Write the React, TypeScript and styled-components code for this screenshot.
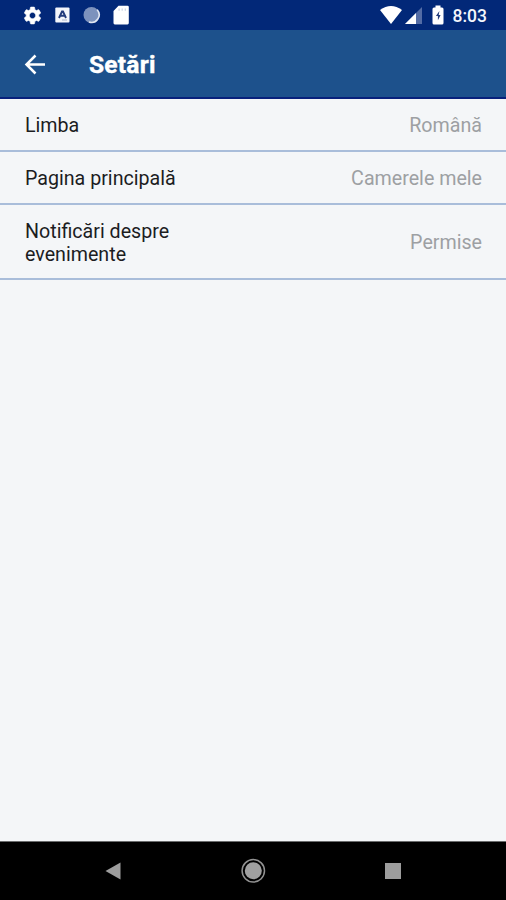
import React from "react";
import styled, { createGlobalStyle } from "styled-components";

const GlobalStyle = createGlobalStyle`
  * { box-sizing: border-box; }
  body { margin: 0; background: #f4f6f8; font-family: Roboto, sans-serif; }
`;

const Screen = styled.div`
  display: flex;
  flex-direction: column;
  width: 506px;
  height: 900px;
  background: #f4f6f8;
`;

const StatusBar = styled.div`
  display: flex;
  justify-content: space-between;
  flex: none;
  height: 30px;
  background: #022878;
`;

const StatusGroup = styled.div<{ $start?: number; $end?: number }>`
  display: flex;
  align-items: center;
  padding-left: ${(p) => p.$start ?? 0}px;
  padding-right: ${(p) => p.$end ?? 0}px;
`;

const Glyph = styled.svg<{ $gap?: number }>`
  display: block;
  flex: none;
  margin-right: ${(p) => p.$gap ?? 0}px;
`;

const Clock = styled.span`
  color: #f4f6fc;
  font-size: 17.5px;
  font-weight: 500;
  line-height: 30px;
  padding-top: 2px;
`;

const AppBar = styled.header`
  display: flex;
  align-items: center;
  flex: none;
  height: 69px;
  padding-left: 22px;
  background: #1d518c;
  border-bottom: 2px solid #08217c;
`;

const BackButton = styled.button`
  display: flex;
  width: 26px;
  height: 26px;
  padding: 0;
  border: 0;
  background: none;
`;

const Title = styled.h1`
  margin: 0 0 0 41px;
  padding-top: 2px;
  color: #fff;
  font-size: 24.6px;
  font-weight: 700;
  line-height: 30px;
  letter-spacing: 0.2px;
  -webkit-text-stroke: 0.4px #fff;
`;

const Settings = styled.main`
  flex: 1;
`;

const Row = styled.div<{ $height: number }>`
  display: flex;
  align-items: center;
  justify-content: space-between;
  height: ${(p) => p.$height}px;
  padding: 3px 24px 0 25px;
  border-bottom: 2px solid #a9bdda;
  font-size: 19.65px;
  line-height: 23.4px;
`;

const Label = styled.span`
  max-width: 200px;
  color: #1c1d1f;
  white-space: pre-line;
`;

const Value = styled.span`
  color: #9da0a3;
`;

const NavBar = styled.nav`
  display: grid;
  grid-template-columns: repeat(3, 140px);
  justify-content: center;
  flex: none;
  height: 59px;
  background: #000;
  border-top: 1px solid #6b6c6d;
`;

const NavButton = styled.button`
  display: flex;
  align-items: center;
  justify-content: center;
  padding: 0;
  border: 0;
  background: none;
`;

const rows = [
  { label: "Limba", value: "Română", height: 53 },
  { label: "Pagina principală", value: "Camerele mele", height: 53 },
  { label: "Notificări despre\nevenimente", value: "Permise", height: 75 },
];

export default function App() {
  return (
    <Screen>
      <GlobalStyle />
      <StatusBar>
        <StatusGroup $start={22}>
          <Glyph width="21" height="21" viewBox="0 0 24 24" fill="#fff" $gap={12}>
            <path stroke="#fff" strokeWidth=".7" d="M19.14 12.94c.04-.3.06-.61.06-.94 0-.32-.02-.64-.07-.94l2.03-1.58c.18-.14.23-.41.12-.61l-1.92-3.32c-.12-.22-.37-.29-.59-.22l-2.39.96c-.5-.38-1.03-.7-1.62-.94L14.4 2.81c-.04-.24-.24-.41-.48-.41h-3.84c-.24 0-.43.17-.47.41L9.25 5.35c-.59.24-1.13.57-1.62.94l-2.39-.96c-.22-.08-.47 0-.59.22L2.74 8.87c-.12.21-.08.47.12.61l2.03 1.58c-.05.3-.09.63-.09.94s.02.64.07.94l-2.03 1.58c-.18.14-.23.41-.12.61l1.92 3.32c.12.22.37.29.59.22l2.39-.96c.5.38 1.03.7 1.62.94l.36 2.54c.05.24.24.41.48.41h3.84c.24 0 .44-.17.47-.41l.36-2.54c.59-.24 1.13-.56 1.62-.94l2.39.96c.22.08.47 0 .59-.22l1.92-3.32c.12-.22.07-.47-.12-.61l-2.01-1.58zM12 15.6c-1.98 0-3.6-1.62-3.6-3.6s1.62-3.6 3.6-3.6 3.6 1.62 3.6 3.6-1.62 3.6-3.6 3.6z" />
          </Glyph>
          <Glyph width="15" height="16" viewBox="0 0 15 16" $gap={12}>
            <rect x=".3" y=".5" width="14.2" height="15" rx="1" fill="#f3f5fb" />
            <path d="M4 11 7 4.5h1L11 11M5.2 8.800h4.400" fill="none" stroke="#233c7c" strokeWidth="1.900" />
            <path d="M7 13h5" stroke="#a9b5c9" />
          </Glyph>
          <Glyph width="19" height="18" viewBox="0 0 19 18" $gap={12}>
            <circle cx="9.5" cy="9" r="8" fill="#7d92bd" />
            <path d="M15.200 3.800A7.600 7.600 0 0 1 7 16" fill="none" stroke="#e1e6f2" strokeWidth="1.600" />
          </Glyph>
          <Glyph width="16" height="20" viewBox="0 0 16 20">
            <path d="M5.5.8h9a1.3 1.3 0 0 1 1.3 1.3v16a1.3 1.3 0 0 1-1.3 1.3H1.8A1.3 1.3 0 0 1 .5 18.100V6Z" fill="#fff" />
            <path d="M6.100 3.400v2.300M9.200 3.400v2.300M12.300 3.400v2.300" stroke="#ccd5e3" strokeWidth="1.200" />
          </Glyph>
        </StatusGroup>
        <StatusGroup $end={19}>
          <Glyph width="22" height="18" viewBox="0 0 22 18" $gap={3}>
            <path d="M0 4Q11-4 22 4L11 18Z" fill="#fff" />
          </Glyph>
          <Glyph width="17" height="17" viewBox="0 0 17 17" $gap={10}>
            <path d="M17 0v17H0Z" fill="#536ca5" />
            <path d="M11 6v11H0Z" fill="#fff" />
          </Glyph>
          <Glyph width="12" height="20" viewBox="0 0 12 20" $gap={9}>
            <path d="M3.500.5h5v2h1.500a1.500 1.500 0 0 1 1.500 1.500v14a1.500 1.500 0 0 1-1.500 1.500H2a1.500 1.500 0 0 1-1.500-1.500V4A1.500 1.500 0 0 1 2 2.500h1.500Z" fill="#fff" />
            <path d="M7.400 6 3.900 11h2v4.300L8.600 10H6.700Z" fill="#233c7c" />
          </Glyph>
          <Clock>8:03</Clock>
        </StatusGroup>
      </StatusBar>
      <AppBar>
        <BackButton aria-label="Înapoi">
          <Glyph width="26" height="26" viewBox="0 0 26 26">
            <path d="M23 13.500H4.500M13.500 4.500 4.500 13.500l9 9" fill="none" stroke="#fff" strokeWidth="2.500" />
          </Glyph>
        </BackButton>
        <Title>Setări</Title>
      </AppBar>
      <Settings>
        {rows.map((row) => (
          <Row key={row.label} $height={row.height}>
            <Label>{row.label}</Label>
            <Value>{row.value}</Value>
          </Row>
        ))}
      </Settings>
      <NavBar>
        <NavButton>
          <Glyph width="16" height="18" viewBox="0 0 16 18">
            <path d="M.5 9 15.500.5v17Z" fill="#9d9d9d" />
          </Glyph>
        </NavButton>
        <NavButton>
          <Glyph width="26" height="26" viewBox="0 0 26 26">
            <circle cx="13.300" cy="12.800" r="11.200" fill="none" stroke="#929292" strokeWidth="1.500" />
            <circle cx="13.300" cy="12.800" r="8.500" fill="#a0a0a0" />
          </Glyph>
        </NavButton>
        <NavButton>
          <Glyph width="16" height="16" viewBox="0 0 16 16">
            <path d="M0 0h16v16H0Z" fill="#9d9d9d" />
          </Glyph>
        </NavButton>
      </NavBar>
    </Screen>
  );
}
